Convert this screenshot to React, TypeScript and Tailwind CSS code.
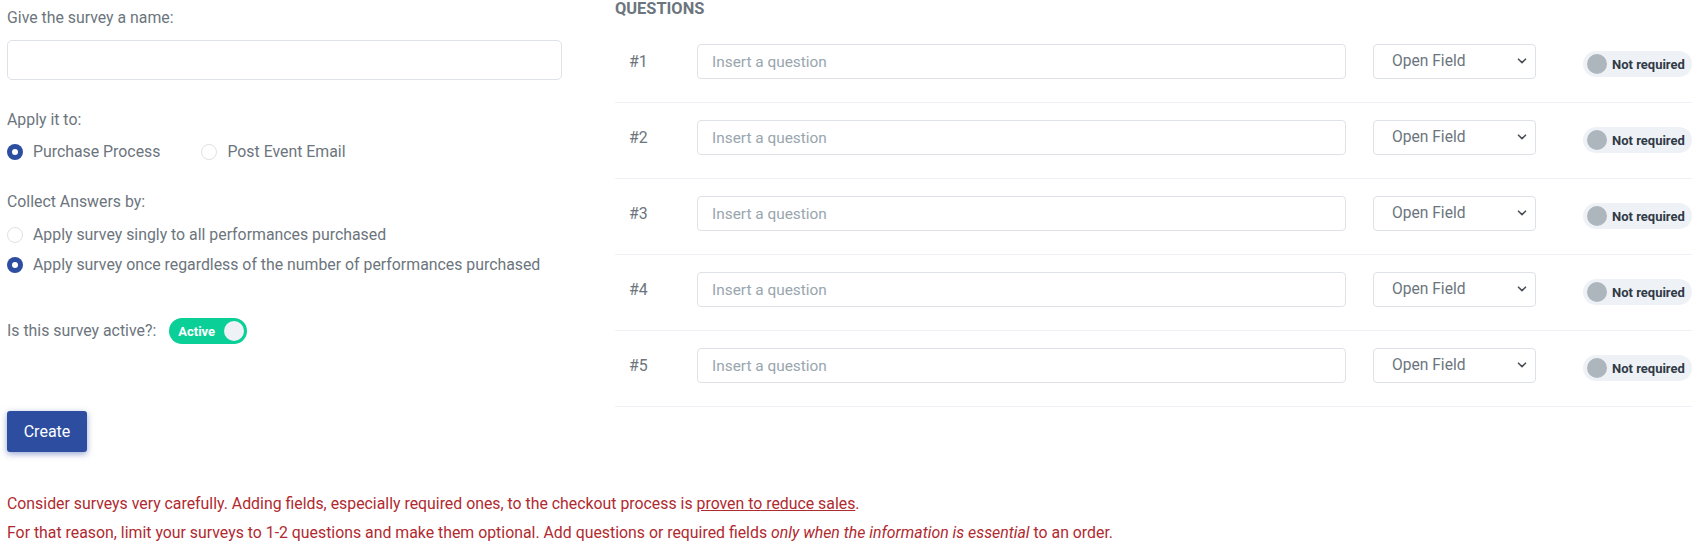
import React from "react";

const font = { fontFamily: "Roboto, 'Noto Sans', sans-serif" };

function Radio({ checked }: { checked: boolean }) {
  return checked ? (
    <span className="flex h-[16px] w-[16px] shrink-0 items-center justify-center rounded-full bg-[#2c4da0]">
      <span className="h-[6px] w-[6px] rounded-full bg-white" />
    </span>
  ) : (
    <span className="h-[16px] w-[16px] shrink-0 rounded-full border border-[#dee2e6] bg-white" />
  );
}

function RadioOption({ checked, label }: { checked: boolean; label: string }) {
  return (
    <label className="flex h-[22px] items-center gap-[10px]">
      <Radio checked={checked} />
      <span className="text-[15.85px] leading-[22px] text-[#6c757d]">{label}</span>
    </label>
  );
}

function QuestionRow({ n }: { n: number }) {
  return (
    <div className="flex items-start border-b border-[#eef0f5] pb-[23px] pt-[17px]">
      <div className="flex h-[35px] w-[82px] shrink-0 items-center pl-[14px] text-[15.85px] text-[#6c757d]">
        #{n}
      </div>
      <input
        className="h-[35px] w-[649px] shrink-0 rounded-[4px] border border-[#dee2e6] bg-white px-[14px] text-[15.4px] text-[#6c757d] outline-none placeholder:text-[#98a6ad]"
        placeholder="Insert a question"
      />
      <div className="relative ml-[27px] h-[35px] w-[163px] shrink-0">
        <div className="flex h-full w-full items-center rounded-[4px] border border-[#dee2e6] bg-white pl-[18px] text-[15.6px] text-[#6c757d]">
          Open Field
        </div>
        <svg
          className="absolute right-[9px] top-[13px]"
          width="10"
          height="8"
          viewBox="0 0 10 8"
          fill="none"
        >
          <path d="M1.5 2.2 L5 5.6 L8.5 2.2" stroke="#4a4f55" strokeWidth="1.6" strokeLinecap="round" strokeLinejoin="round" />
        </svg>
      </div>
      <div className="ml-[47px] mt-[7px] flex h-[26px] w-[109px] shrink-0 items-center rounded-full bg-[#eef2f7] pl-[4px]">
        <span className="h-[20px] w-[20px] shrink-0 rounded-full bg-[#adb5bd]" />
        <span className="ml-[5px] whitespace-nowrap text-[13px] font-bold leading-none text-[#313a46]">Not required</span>
      </div>
    </div>
  );
}

export default function App() {
  return (
    <div className="relative h-[546px] w-[1697px] overflow-hidden bg-white" style={font}>
      <div className="flex">
        {/* Left column */}
        <div className="ml-[7px] w-[555px] shrink-0">
          <div className="mt-[7px] h-[22px] text-[15.85px] leading-[22px] text-[#6c757d]">Give the survey a name:</div>
          <input className="mt-[11px] h-[40px] w-[555px] rounded-[5px] border border-[#dee2e6] bg-white px-[14px] text-[15px] outline-none" />

          <div className="mt-[29px] h-[22px] text-[15.85px] leading-[22px] text-[#6c757d]">Apply it to:</div>
          <div className="mt-[10px] flex items-center gap-[41px]">
            <RadioOption checked label="Purchase Process" />
            <RadioOption checked={false} label="Post Event Email" />
          </div>

          <div className="mt-[28px] h-[22px] text-[15.85px] leading-[22px] text-[#6c757d]">Collect Answers by:</div>
          <div className="mt-[11px]">
            <RadioOption checked={false} label="Apply survey singly to all performances purchased" />
          </div>
          <div className="mt-[8px]">
            <RadioOption checked label="Apply survey once regardless of the number of performances purchased" />
          </div>

          <div className="mt-[42px] flex h-[26px] items-center">
            <span className="text-[15.85px] leading-[22px] text-[#6c757d]">Is this survey active?:</span>
            <div className="ml-[13px] flex h-[26px] w-[78px] items-center justify-between rounded-full bg-[#0acf97] pl-[9px] pr-[3px]">
              <span className="text-[13px] font-bold leading-none text-white">Active</span>
              <span className="h-[20px] w-[20px] rounded-full bg-[#eef2f7]" />
            </div>
          </div>

          <button className="mt-[67px] h-[41px] w-[80px] rounded-[3px] bg-[#2c4da0] text-[16px] text-white shadow-[0_2px_6px_0_rgba(44,77,160,0.5)]">
            Create
          </button>
        </div>

        {/* Right column */}
        <div className="ml-[53px] flex-1 pr-[5px]">
          <div className="h-[27px] text-[16.4px] font-bold uppercase leading-[17px] text-[#6c757d]">
            Questions
          </div>
          {[1, 2, 3, 4, 5].map((n) => (
            <QuestionRow key={n} n={n} />
          ))}
        </div>
      </div>

      <div className="absolute left-[7px] top-[493px] text-[15.85px] leading-[22px] text-[#b02a30]">
        <p>
          Consider surveys very carefully. Adding fields, especially required ones, to the checkout process is{" "}
          <a className="underline">proven to reduce sales</a>.
        </p>
        <p className="mt-[7px]">
          For that reason, limit your surveys to 1-2 questions and make them optional. Add questions or required fields{" "}
          <em>only when the information is essential</em> to an order.
        </p>
      </div>
    </div>
  );
}
